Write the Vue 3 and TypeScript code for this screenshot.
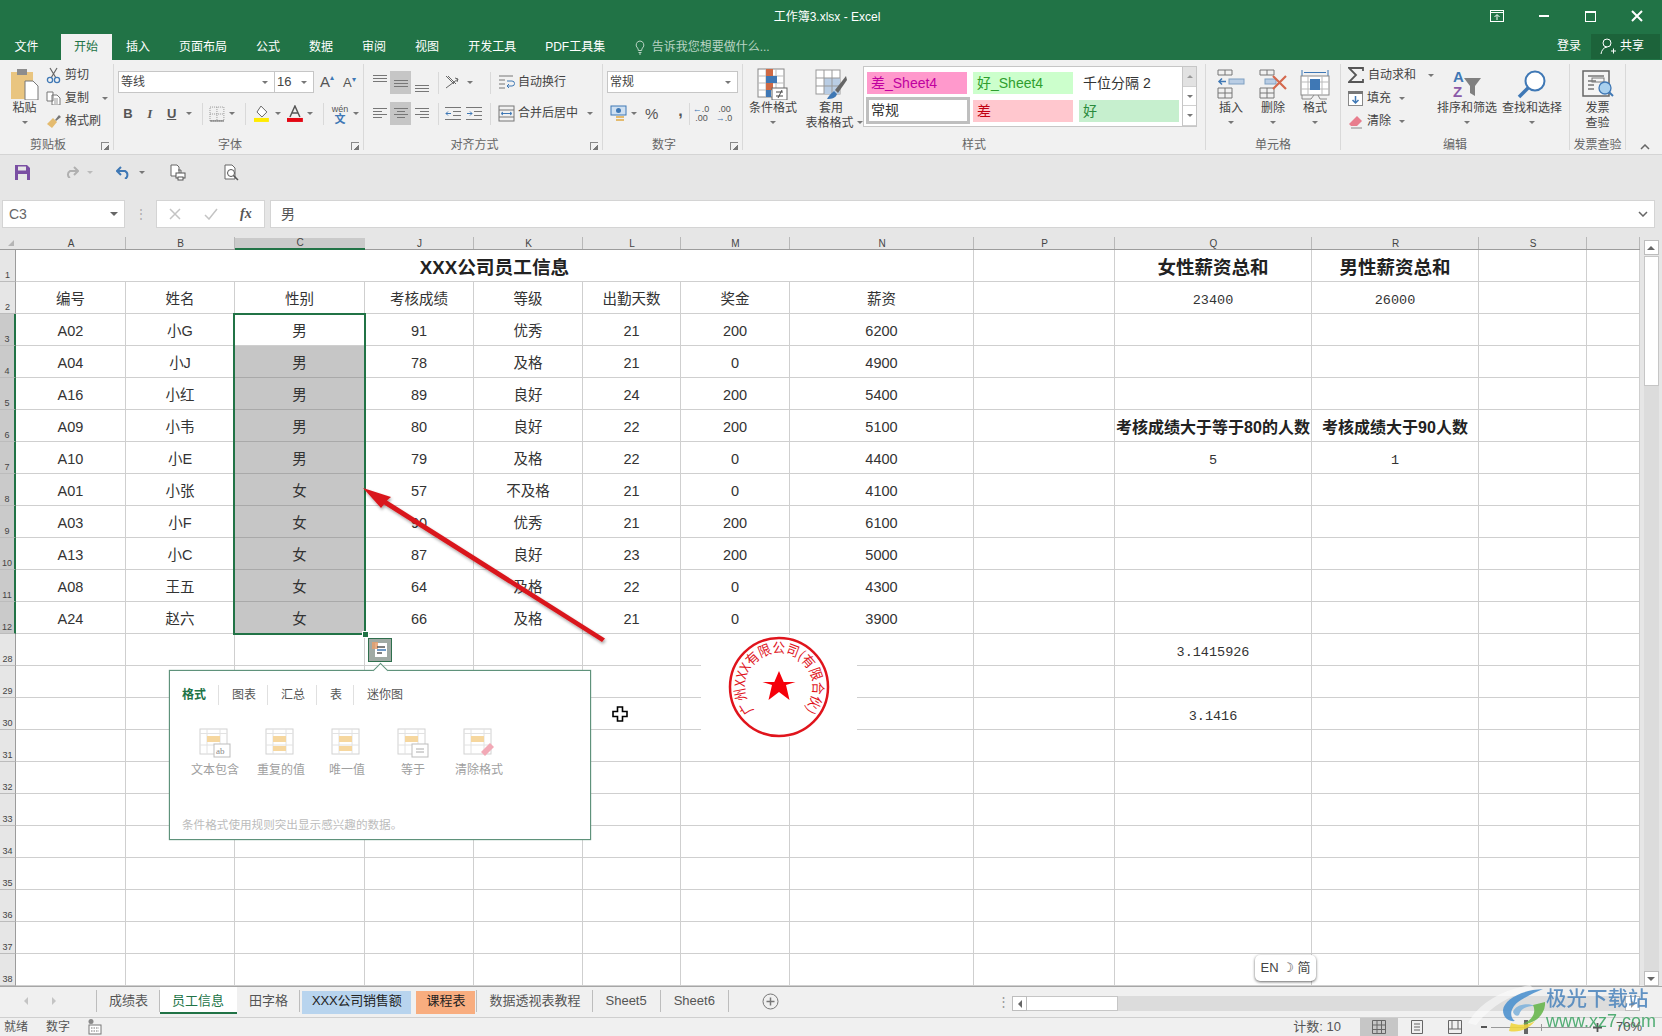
<script setup lang="ts">
const topTabs = ['插入', '页面布局', '公式', '数据', '审阅', '视图', '开发工具', 'PDF工具集']

const colHeads = ['A', 'B', 'C', 'J', 'K', 'L', 'M', 'N', 'P', 'Q', 'R', 'S', '']

const staff = [
  ['A02', '小G', '男', '91', '优秀', '21', '200', '6200'],
  ['A04', '小J', '男', '78', '及格', '21', '0', '4900'],
  ['A16', '小红', '男', '89', '良好', '24', '200', '5400'],
  ['A09', '小韦', '男', '80', '良好', '22', '200', '5100'],
  ['A10', '小E', '男', '79', '及格', '22', '0', '4400'],
  ['A01', '小张', '女', '57', '不及格', '21', '0', '4100'],
  ['A03', '小F', '女', '90', '优秀', '21', '200', '6100'],
  ['A13', '小C', '女', '87', '良好', '23', '200', '5000'],
  ['A08', '王五', '女', '64', '及格', '22', '0', '4300'],
  ['A24', '赵六', '女', '66', '及格', '21', '0', '3900'],
]

// right-hand block, keyed by row number: [Q, R, class]
const side: Record<string, [string, string, string]> = {
  '2': ['23400', '26000', 'mono'],
  '6': ['考核成绩大于等于80的人数', '考核成绩大于90人数', 'side-head'],
  '7': ['5', '1', 'mono'],
  '28': ['3.1415926', '', 'mono'],
  '30': ['3.1416', '', 'mono'],
}

const rowNums = ['3', '4', '5', '6', '7', '8', '9', '10', '11', '12']
const lowerRows = ['28', '29', '30', '31', '32', '33', '34', '35', '36', '37', '38']

const analysisTabs = ['格式', '图表', '汇总', '表', '迷你图']
const analysisItems = [
  { label: '文本包含', kind: 'text' },
  { label: '重复的值', kind: 'dup' },
  { label: '唯一值', kind: 'uniq' },
  { label: '等于', kind: 'eq' },
  { label: '清除格式', kind: 'clear' },
]

const sheets = [
  { name: '成绩表', cls: '' },
  { name: '员工信息', cls: 'active' },
  { name: '田字格', cls: '' },
  { name: 'XXX公司销售额', cls: 'blue' },
  { name: '课程表', cls: 'orange' },
  { name: '数据透视表教程', cls: '' },
  { name: 'Sheet5', cls: 'latin' },
  { name: 'Sheet6', cls: 'latin' },
]
</script>

<template>
  <div class="app">
    <header class="title-bar">
      <div class="title">工作簿3.xlsx - Excel</div>
      <div class="win">
        <span class="win-btn"><svg width="14" height="12" viewBox="0 0 14 12"><rect x="0.5" y="0.5" width="13" height="11" fill="none" stroke="#fff" /><path d="M0 2.5h14M7 10V5M4.5 7 7 4.5 9.5 7" fill="none" stroke="#fff" /></svg></span>
        <span class="win-btn"><svg width="10" height="3" viewBox="0 0 10 3"><rect width="10" height="2" fill="#fff" /></svg></span>
        <span class="win-btn"><svg width="11" height="11" viewBox="0 0 11 11"><rect x="0.5" y="0.5" width="10" height="10" fill="none" stroke="#fff" /><rect width="11" height="2" fill="#fff" /></svg></span>
        <span class="win-btn"><svg width="12" height="12" viewBox="0 0 12 12"><path d="M1 1l10 10M11 1 1 11" stroke="#fff" stroke-width="2" /></svg></span>
      </div>
    </header>

    <nav class="tab-row">
      <span class="tab first">文件</span>
      <span class="tab current">开始</span>
      <span v-for="t in topTabs" :key="t" class="tab">{{ t }}</span>
      <span class="hint">
        <svg width="10" height="15" viewBox="0 0 10 15"><path d="M5 1a4 4 0 0 0-2.500 7c.6.6.8 1.200.8 2.500h3.400c0-1.300.2-1.900.8-2.500A4 4 0 0 0 5 1zM3.500 12.500h3M4 14h2" fill="none" stroke="#b9d3c4" /></svg>
        告诉我您想要做什么...
      </span>
      <span class="login">登录</span>
      <span class="share">
        <svg width="17" height="17" viewBox="0 0 17 17"><circle cx="7" cy="5" r="4" fill="none" stroke="#fff" /><path d="M1 16c.4-3.500 2.500-6.500 6-7M11 13h5M13.500 10.500v5" fill="none" stroke="#fff" /></svg>
        共享
      </span>
    </nav>

    <section class="ribbon">
      <div class="group g-clip launch">
        <div class="body">
          <div class="big paste">
            <div class="big-ic">
              <svg width="30" height="32" viewBox="0 0 30 32"><rect x="1" y="4" width="22" height="27" fill="#e9c580" /><rect x="7" y="1" width="10" height="6" fill="#8d8d8d" /><path d="M15 13h8l5 5v14H15z" fill="#fff" stroke="#777" /></svg>
            </div>
            <span>粘贴</span>
            <i class="caret" />
          </div>
          <div class="small-col">
            <div class="small">
              <svg width="15" height="17" viewBox="0 0 15 17"><path d="M4 1l6 10M11 1 5 11" stroke="#666" stroke-width="1.200" /><circle cx="4" cy="13" r="2.600" fill="none" stroke="#3f78b5" stroke-width="1.300" /><circle cx="11" cy="13" r="2.600" fill="none" stroke="#3f78b5" stroke-width="1.300" /></svg>
              <span>剪切</span>
            </div>
            <div class="small">
              <svg width="15" height="14" viewBox="0 0 15 14"><path d="M1 1h6v9H1zM6 4h5l3 3v7H6z" fill="#fff" stroke="#777" /><path d="M8 8h4M8 10h4M8 12h4" stroke="#999" /></svg>
              <span>复制</span>
              <i class="caret copy-caret" />
            </div>
            <div class="small">
              <svg width="15" height="15" viewBox="0 0 15 15"><path d="M9 6 13 1l2 2-5 4z" fill="#777" /><path d="M1 10 7 4l4 4-5 6z" fill="#e4bb6f" /></svg>
              <span>格式刷</span>
            </div>
          </div>
        </div>
        <div class="label">剪贴板</div>
        <i class="launcher" />
      </div>

      <div class="group g-font launch">
        <div class="body rows">
          <div class="row">
            <div class="select font-name"><span>等线</span><i class="caret" /></div>
            <div class="select font-size"><span>16</span><i class="caret" /></div>
            <span class="grow-a">A<small>▴</small></span>
            <span class="shrink-a">A<small>▾</small></span>
          </div>
          <div class="row font-tools">
            <b class="cell">B</b>
            <i class="cell serif-i">I</i>
            <u class="cell u-btn">U</u>
            <i class="caret tight" />
            <i class="sep" />
            <svg width="16" height="16" viewBox="0 0 16 16"><rect x="1" y="1" width="14" height="14" fill="none" stroke="#999" stroke-dasharray="1 1" /><path d="M8 1v14M1 8h14" stroke="#999" stroke-dasharray="1 1" /><path d="M1 15h14" stroke="#666" /></svg>
            <i class="caret tight" />
            <i class="sep" />
            <svg class="fill-ic" width="18" height="18" viewBox="0 0 18 18"><path d="M8 1l6 6-5 5-5-5z" fill="#fff" stroke="#666" /><rect x="1" y="13" width="15" height="4" fill="#ffeb00" /></svg>
            <i class="caret tight" />
            <svg class="color-ic" width="16" height="18" viewBox="0 0 16 18"><path d="M3 12 8 1l5 11M5 8h6" fill="none" stroke="#555" stroke-width="1.500" /><rect y="13" width="16" height="4" fill="#e30613" /></svg>
            <i class="caret tight" />
            <i class="sep" />
            <span class="wen"><small>wén</small><em>文</em></span>
            <i class="caret tight" />
          </div>
        </div>
        <div class="label">字体</div>
        <i class="launcher" />
      </div>

      <div class="group g-align launch">
        <div class="body rows">
          <div class="row">
            <span class="al"><svg width="14" height="22" viewBox="0 0 14 22"><path d="M0 3.500h14M0 6.500h14M0 9.500h14" stroke="#777" /></svg></span>
            <span class="al on"><svg width="14" height="22" viewBox="0 0 14 22"><path d="M0 8.500h14M0 11.500h14M0 14.500h14" stroke="#777" /></svg></span>
            <span class="al"><svg width="14" height="22" viewBox="0 0 14 22"><path d="M0 13.500h14M0 16.500h14M0 19.500h14" stroke="#777" /></svg></span>
            <i class="sep s-a" />
            <span class="al">
              <svg width="15" height="16" viewBox="0 0 15 16"><path d="M1 1l8 8M3 1l8 8M1 13 13 4M10 3l3 1-1 3" fill="none" stroke="#666" /></svg>
            </span>
            <i class="caret tight" />
            <i class="sep s-b" />
            <svg width="17" height="17" viewBox="0 0 17 17"><path d="M1 2h14M1 6h6M1 10h6M1 14h6" stroke="#777" /><path d="M9 7h5a2 2 0 0 1 0 5h-4M11 10l-2 2 2 2" fill="none" stroke="#3f78b5" /></svg>
            <span class="tool-text">自动换行</span>
          </div>
          <div class="row">
            <span class="al"><svg width="14" height="13" viewBox="0 0 14 13"><path d="M0 1.500h14M0 4.500h9M0 7.500h14M0 10.500h9" stroke="#777" /></svg></span>
            <span class="al on"><svg width="14" height="13" viewBox="0 0 14 13"><path d="M0 1.500h14M3 4.500h8M0 7.500h14M3 10.500h8" stroke="#777" /></svg></span>
            <span class="al"><svg width="14" height="13" viewBox="0 0 14 13"><path d="M0 1.500h14M5 4.500h9M0 7.500h14M5 10.500h9" stroke="#777" /></svg></span>
            <i class="sep s-a" />
            <span class="al"><svg width="16" height="13" viewBox="0 0 16 13"><path d="M0 .5h16M8 4.500h8M8 8.500h8M0 12.500h16" stroke="#777" /><path d="M6 6.500H1M3 4.500l-2 2 2 2" fill="none" stroke="#3f78b5" /></svg></span>
            <span class="al"><svg width="16" height="13" viewBox="0 0 16 13"><path d="M0 .5h16M8 4.500h8M8 8.500h8M0 12.500h16" stroke="#777" /><path d="M1 6.500h5M4 4.500l2 2-2 2" fill="none" stroke="#3f78b5" /></svg></span>
            <i class="sep s-c" />
            <svg width="17" height="17" viewBox="0 0 17 17"><rect x="1" y="1" width="15" height="15" fill="none" stroke="#777" /><path d="M1 5h15M1 12h15" stroke="#777" /><path d="M4 8.500h9M5 7l-2 1.500L5 10M12 7l2 1.500L12 10" fill="none" stroke="#3f78b5" /></svg>
            <span class="tool-text">合并后居中</span>
            <i class="caret merge-caret" />
          </div>
        </div>
        <div class="label">对齐方式</div>
        <i class="launcher" />
      </div>

      <div class="group g-num launch">
        <div class="body rows">
          <div class="row">
            <div class="select num-format"><span>常规</span><i class="caret" /></div>
          </div>
          <div class="row num-tools">
            <svg width="17" height="17" viewBox="0 0 17 17"><rect x="1" y="1" width="15" height="9" fill="#cfe0f1" stroke="#3f78b5" /><circle cx="8.500" cy="5.500" r="2.500" fill="#3f78b5" /><rect x="6" y="11" width="8" height="2" fill="#e4bb6f" /><rect x="6" y="14" width="8" height="2" fill="#e4bb6f" /></svg>
            <i class="caret tight" />
            <span class="pct">%</span>
            <span class="comma">,</span>
            <i class="sep s-d" />
            <span class="dec"><em>←</em>.0<br />.00</span>
            <span class="dec d2">.00<br /><em>→</em>.0</span>
          </div>
        </div>
        <div class="label">数字</div>
        <i class="launcher" />
      </div>

      <div class="group g-style">
        <div class="body">
          <div class="big cond">
            <div class="big-ic">
              <svg width="32" height="32" viewBox="0 0 32 32"><rect x="1" y="1" width="26" height="28" fill="#fff" stroke="#888" /><path d="M9 1v28M19 1v28M1 8h26M1 15h26M1 22h26" stroke="#bbb" /><rect x="9" y="1" width="7" height="7" fill="#cf6a45" /><rect x="9" y="8" width="11" height="7" fill="#3f78b5" /><rect x="9" y="15" width="7" height="7" fill="#cf6a45" /><rect x="9" y="22" width="5" height="7" fill="#3f78b5" /><rect x="15" y="20" width="15" height="12" fill="#fff" stroke="#666" /><path d="M19 24h7M19 28h7M25 22l-4 8" stroke="#444" fill="none" /></svg>
            </div>
            <span>条件格式</span>
            <i class="caret" />
          </div>
          <div class="big tbl">
            <div class="big-ic">
              <svg width="32" height="32" viewBox="0 0 32 32"><rect x="1" y="2" width="24" height="24" fill="#fff" stroke="#999" /><rect x="9" y="10" width="16" height="16" fill="#b9cde4" /><path d="M9 2v24M17 2v24M1 10h24M1 18h24" stroke="#999" /><path d="M31 8 20 22l3 3L32 12z" fill="#666" /><path d="M19 23c-2 2-4 3-7 8 5 0 9-1 10-5z" fill="#3f78b5" /></svg>
            </div>
            <span>套用</span>
            <span class="with-caret">表格格式<i class="caret" /></span>
          </div>
          <div class="gallery">
            <div class="style-grid">
              <span class="st bad4">差_Sheet4</span>
              <span class="st good4">好_Sheet4</span>
              <span class="st comma2">千位分隔 2</span>
              <span class="st normal">常规</span>
              <span class="st bad">差</span>
              <span class="st good">好</span>
            </div>
            <div class="gal-scroll">
              <span class="off"><i class="caret up" /></span>
              <span><i class="caret" /></span>
              <span class="more"><i class="caret" /></span>
            </div>
          </div>
        </div>
        <div class="label">样式</div>
      </div>

      <div class="group g-cells">
        <div class="body">
          <div class="big cell-btn">
            <div class="big-ic">
              <svg width="28" height="30" viewBox="0 0 28 30"><path d="M1 1h14v5H1zM8 1v5M1 19h14v10H1zM8 19v10M1 24h14" fill="none" stroke="#777" /><rect x="12" y="10" width="15" height="5" fill="#b9cde4" stroke="#7f9fc2" /><path d="M9 12.500H2M5 9.500l-3 3 3 3" fill="none" stroke="#3f78b5" stroke-width="1.500" /></svg>
            </div>
            <span>插入</span>
            <i class="caret" />
          </div>
          <div class="big cell-btn">
            <div class="big-ic">
              <svg width="30" height="30" viewBox="0 0 30 30"><path d="M2 1h14v5H2zM9 1v5M2 19h14v10H2zM9 19v10M2 24h14" fill="none" stroke="#777" /><rect x="7" y="10" width="11" height="5" fill="#b9cde4" stroke="#7f9fc2" /><path d="M15 7l13 13M28 7 15 20" stroke="#d4694e" stroke-width="2.200" /></svg>
            </div>
            <span>删除</span>
            <i class="caret" />
          </div>
          <div class="big cell-btn">
            <div class="big-ic">
              <svg width="30" height="32" viewBox="0 0 30 32"><path d="M2 2v6M28 2v6M4 4.500h22" fill="none" stroke="#3f78b5" /><rect x="1" y="8" width="28" height="19" fill="#fff" stroke="#888" /><path d="M8 8v19M22 8v19M1 14h28M1 21h28" stroke="#bbb" /><rect x="10" y="11" width="10" height="11" fill="#3f78b5" /><path d="M2 27v4h9l3-4M18 27l2 4h7" fill="none" stroke="#888" /></svg>
            </div>
            <span>格式</span>
            <i class="caret" />
          </div>
        </div>
        <div class="label">单元格</div>
      </div>

      <div class="group g-edit">
        <div class="body">
          <div class="small-col edit-col">
            <div class="small">
              <svg width="16" height="16" viewBox="0 0 16 16"><path d="M15 4V1H1l7 7-7 7h14v-3" fill="none" stroke="#555" stroke-width="1.800" /></svg>
              <span>自动求和</span>
              <i class="caret sum-caret" />
            </div>
            <div class="small">
              <svg width="15" height="15" viewBox="0 0 15 15"><rect x="0.5" y="0.5" width="14" height="14" fill="#fff" stroke="#888" /><rect width="15" height="3" fill="#777" /><path d="M7.500 5v7M4.500 9l3 3 3-3" fill="none" stroke="#3f78b5" stroke-width="1.500" /></svg>
              <span>填充</span>
              <i class="caret tight" />
            </div>
            <div class="small">
              <svg width="15" height="15" viewBox="0 0 15 15"><path d="M1 10 9 2l5 5-5 5H3z" fill="#e87d8d" /><path d="M3 14h11" stroke="#888" /></svg>
              <span>清除</span>
              <i class="caret tight" />
            </div>
          </div>
          <div class="big wide">
            <div class="big-ic">
              <svg width="30" height="30" viewBox="0 0 30 30"><text x="1" y="13" class="az a">A</text><text x="1" y="28" class="az z">Z</text><path d="M12 9h17l-6 8v10l-5-3v-7z" fill="#808080" /></svg>
            </div>
            <span>排序和筛选</span>
            <i class="caret" />
          </div>
          <div class="big wide find">
            <div class="big-ic">
              <svg width="30" height="30" viewBox="0 0 30 30"><circle cx="18" cy="12" r="9.500" fill="#fff" stroke="#3f78b5" stroke-width="2" /><path d="M11 19 2 28" stroke="#3f78b5" stroke-width="3.500" /></svg>
            </div>
            <span>查找和选择</span>
            <i class="caret" />
          </div>
        </div>
        <div class="label">编辑</div>
      </div>

      <div class="group g-inv">
        <div class="body">
          <div class="big inv">
            <div class="big-ic">
              <svg width="32" height="28" viewBox="0 0 32 28"><rect x="1" y="1" width="26" height="25" fill="#f4f4f4" stroke="#666" stroke-width="1.500" /><path d="M6 6h16M6 11h8M6 15h6M6 19h6" stroke="#777" stroke-width="1.500" /><rect x="10" y="8" width="12" height="4" fill="none" stroke="#777" /><circle cx="23" cy="18" r="6" fill="#a9d0ee" stroke="#3f78b5" stroke-width="1.300" /><path d="M27 22l4 4" stroke="#3f78b5" stroke-width="2" /></svg>
            </div>
            <span>发票</span>
            <span>查验</span>
          </div>
        </div>
        <div class="label">发票查验</div>
      </div>
      <svg class="collapse" width="10" height="6" viewBox="0 0 10 6"><path d="M1 5l4-4 4 4" fill="none" stroke="#666" stroke-width="1.500" /></svg>
    </section>

    <section class="qat">
      <svg class="q-save" width="15" height="15" viewBox="0 0 15 15"><path d="M0 0h12l3 3v12H0z" fill="#7a4fa3" /><rect x="3" y="1.500" width="8" height="4" fill="#e6e6e6" /><rect x="3" y="9" width="9" height="6" fill="#e6e6e6" /></svg>
      <svg class="q-redo" width="14" height="12" viewBox="0 0 14 12"><path d="M13 5H5a4 4 0 0 0 0 7M9 1l4 4-4 4" fill="none" stroke="#b0b0b0" stroke-width="2" /></svg>
      <i class="caret q-caret muted" />
      <svg class="q-undo" width="15" height="13" viewBox="0 0 15 13"><path d="M1 5h8a4.500 4.500 0 0 1 0 8M5 1 1 5l4 4" fill="none" stroke="#3f78b5" stroke-width="2" /></svg>
      <i class="caret q-caret" />
      <svg class="q-print" width="16" height="17" viewBox="0 0 16 17"><path d="M1 1h6l2 2v9H1z" fill="#fff" stroke="#666" /><rect x="6" y="9" width="9" height="5" fill="#fff" stroke="#555" /><rect x="8" y="13" width="5" height="3" fill="#fff" stroke="#555" /><path d="M8 6h3v3" fill="none" stroke="#666" /></svg>
      <svg class="q-prev" width="15" height="17" viewBox="0 0 15 17"><path d="M1 1h7l3 3v11H1z" fill="#fff" stroke="#666" /><circle cx="7" cy="9" r="3.500" fill="#fff" stroke="#555" /><path d="M9.500 11.500 14 16" stroke="#555" stroke-width="1.500" /></svg>
    </section>

    <section class="formula">
      <div class="name-box"><span>C3</span><i class="caret" /></div>
      <span class="f-dots">⋮</span>
      <div class="fx-box">
        <svg width="12" height="12" viewBox="0 0 12 12"><path d="M1 1l10 10M11 1 1 11" stroke="#c4c4c4" stroke-width="1.500" /></svg>
        <svg width="14" height="12" viewBox="0 0 14 12"><path d="M1 7l4 4 8-10" fill="none" stroke="#c4c4c4" stroke-width="1.500" /></svg>
        <em>fx</em>
      </div>
      <div class="f-input">
        <span>男</span>
        <svg width="10" height="6" viewBox="0 0 10 6"><path d="M1 1l4 4 4-4" fill="none" stroke="#666" stroke-width="1.500" /></svg>
      </div>
    </section>

    <main class="sheet">
      <div class="grid-area">
        <div class="grid">
          <div class="corner"><i /></div>
          <div v-for="c in colHeads" :key="c" class="col-head" :class="{ hot: c === 'C' }">{{ c }}</div>

          <div class="row-head">1</div>
          <div class="cell-box merged">XXX公司员工信息</div>
          <div class="cell-box" />
          <div class="cell-box big-head">女性薪资总和</div>
          <div class="cell-box big-head">男性薪资总和</div>
          <div class="cell-box" />
          <div class="cell-box" />

          <div class="row-head">2</div>
          <div v-for="h in ['编号', '姓名', '性别', '考核成绩', '等级', '出勤天数', '奖金', '薪资']" :key="h" class="cell-box">{{ h }}</div>
          <div class="cell-box" />
          <div class="cell-box mono">23400</div>
          <div class="cell-box mono">26000</div>
          <div class="cell-box" />
          <div class="cell-box" />

          <template v-for="(r, i) in staff" :key="rowNums[i]">
            <div class="row-head hot">{{ rowNums[i] }}</div>
            <div v-for="(v, j) in r" :key="j" class="cell-box" :class="{ picked: j === 2 && i > 0 }">{{ v }}</div>
            <div class="cell-box" />
            <div class="cell-box" :class="side[rowNums[i]]?.[2]">{{ side[rowNums[i]]?.[0] }}</div>
            <div class="cell-box" :class="side[rowNums[i]]?.[2]">{{ side[rowNums[i]]?.[1] }}</div>
            <div class="cell-box" />
            <div class="cell-box" />
          </template>

          <template v-for="n in lowerRows" :key="n">
            <div class="row-head">{{ n }}</div>
            <div v-for="k in 8" :key="k" class="cell-box" />
            <div class="cell-box" />
            <div class="cell-box" :class="side[n]?.[2]">{{ side[n]?.[0] }}</div>
            <div class="cell-box" />
            <div class="cell-box" />
            <div class="cell-box" />
          </template>
        </div>

        <!-- things lying over the grid -->
        <div class="selection"><i /></div>

        <div class="seal">
          <svg width="110" height="110" viewBox="-55 -55 110 110">
            <circle r="49" fill="#fff" stroke="#e0141c" stroke-width="2.500" />
            <path id="seal-arc" d="M-24.900 23.200A34 34 0 1 1 24.900 23.200" fill="none" />
            <text class="seal-text" fill="#e0141c">
              <textPath href="#seal-arc" textLength="156" lengthAdjust="spacingAndGlyphs">广州XXX有限公司(有限合伙)</textPath>
            </text>
            <path d="M0-16 4.700-5 16.500-5 7-2 10.500 13 0 5-10.500 13-7-2-16.500-5-4.700-5z" fill="#f5000a" />
          </svg>
        </div>

        <svg class="arrow" width="300" height="200" viewBox="0 0 300 200">
          <defs>
            <filter id="arrow-shadow" x="-10%" y="-10%" width="120%" height="130%"><feDropShadow dx="1" dy="2" stdDeviation="1.500" flood-color="#000" flood-opacity=".35" /></filter>
          </defs>
          <path d="M6 4 34 13 30 16.500 248 154.500 245 158 27 20.500 24 24z" fill="#d9191f" filter="url(#arrow-shadow)" />
        </svg>

        <button class="qa-btn">
          <svg width="16" height="16" viewBox="0 0 16 16"><rect x="3" y="1" width="12" height="14" fill="#fff" /><rect x="0" y="0" width="6" height="7" fill="#e6a06e" opacity=".85" /><path d="M5 5h8" stroke="#555" stroke-width="1.500" /><path d="M5 8h9" stroke="#3f78b5" stroke-width="1.500" /><path d="M5 11h5" stroke="#555" stroke-width="1.500" /></svg>
        </button>

        <div class="analysis">
          <i class="notch" />
          <div class="qa-tabs">
            <span v-for="(t, i) in analysisTabs" :key="t" :class="{ on: i === 0 }">{{ t }}</span>
          </div>
          <div class="qa-items">
            <div v-for="it in analysisItems" :key="it.kind" class="qa-item">
              <svg width="32" height="30" viewBox="0 0 32 30">
                <rect x="1" y="1" width="27" height="25" fill="#fff" stroke="#d2d2d2" />
                <path d="M8 1v25M21 1v25M1 5.500h27M1 17h27" stroke="#e2e2e2" />
                <rect x="8" y="8" width="13" height="6" fill="#f6d79f" />
                <rect v-if="it.kind === 'dup' || it.kind === 'uniq'" x="8" y="18" width="13" height="5" fill="#f6d79f" />
                <template v-if="it.kind === 'text'"><rect x="15" y="16" width="16" height="13" fill="#fff" stroke="#bdbdbd" /><text x="17" y="26" class="ab">ab</text></template>
                <template v-if="it.kind === 'eq'"><rect x="15" y="16" width="16" height="13" fill="#fff" stroke="#bdbdbd" /><path d="M19 21h8M19 24h8" stroke="#aaa" /></template>
                <path v-if="it.kind === 'clear'" d="M18 24 27 15l4 4-9 9z" fill="#f2a9b6" />
              </svg>
              <span>{{ it.label }}</span>
            </div>
          </div>
          <p class="qa-foot">条件格式使用规则突出显示感兴趣的数据。</p>
        </div>

        <svg class="pointer" width="16" height="16" viewBox="0 0 16 16"><path d="M5.500 1h5v4.500H15v5h-4.500V15h-5v-4.500H1v-5h4.500z" fill="#fff" stroke="#000" stroke-width="1.600" /></svg>

        <div class="ime">EN <span class="moon">☽</span> 简</div>
      </div>

      <aside class="v-scroll">
        <span class="v-btn"><i class="caret up" /></span>
        <span class="v-thumb" />
        <span class="v-fill" />
        <span class="v-btn"><i class="caret" /></span>
      </aside>
    </main>

    <section class="sheet-tabs">
      <div class="nav">
        <i class="nav-l" />
        <i class="nav-r" />
      </div>
      <span v-for="s in sheets" :key="s.name" class="sheet-tab" :class="s.cls">{{ s.name }}</span>
      <svg class="plus" width="17" height="17" viewBox="0 0 17 17"><circle cx="8.500" cy="8.500" r="7.500" fill="none" stroke="#777" /><path d="M8.500 4.500v8M4.500 8.500h8" stroke="#777" stroke-width="1.500" /></svg>
      <span class="h-dots">⋮</span>
      <div class="h-scroll">
        <span class="h-btn"><i class="nav-l dark" /></span>
        <span class="h-thumb" />
        <span class="h-end"><i class="nav-r dark" /></span>
      </div>
    </section>

    <footer class="status">
      <span>就绪</span>
      <span class="st-num">数字</span>
      <svg class="st-macro" width="14" height="16" viewBox="0 0 14 16"><circle cx="3" cy="2.500" r="2.500" fill="#888" /><rect x="1" y="6" width="12" height="9" fill="#fff" stroke="#777" /><path d="M3 9h8M3 12h8" stroke="#777" stroke-dasharray="1.500 1" /></svg>
      <span class="st-count">计数: 10</span>
      <span class="view on"><svg width="14" height="14" viewBox="0 0 14 14"><path d="M.5.5h13v13H.5zM5 .5v13M9.500.5v13M.5 5h13M.5 9.500h13" fill="none" stroke="#666" /></svg></span>
      <span class="view"><svg width="12" height="14" viewBox="0 0 12 14"><path d="M.5.5h11v13H.5zM3 4h6M3 7h6M3 10h6" fill="none" stroke="#666" /></svg></span>
      <span class="view"><svg width="14" height="14" viewBox="0 0 14 14"><path d="M.5.5h13v13H.5zM.5 9h13M4 .5V9M10 .5V9" fill="none" stroke="#666" /></svg></span>
      <span class="zoom-minus" />
      <span class="slider"><i class="tick" /><i class="thumb" /></span>
      <svg class="zoom-plus" width="9" height="9" viewBox="0 0 9 9"><path d="M0 4.500h9M4.500 0v9" stroke="#555" stroke-width="1.800" /></svg>
      <span class="zoom-val">70%</span>
    </footer>

    <div class="watermark">
      <svg class="wm-fan" width="90" height="50" viewBox="0 0 90 50"><path d="M0 40C10 22 30 8 62 2L66 6C40 12 20 26 8 42z" fill="#fff" opacity=".6" /></svg>
      <svg class="wm-logo" width="42" height="44" viewBox="0 0 42 44">
        <path d="M40 1C18 2 1 12 0 22c0 8 6 12 12 11C5 28 8 18 18 12 26 7 33 4 40 1z" fill="#4a90cf" />
        <path d="M10 24c2-7 14-10 22-6-8 0-14 2-16 9-2 2-5 0-6-3z" fill="#7fb3dc" />
        <path d="M30 17 42 14C43 26 32 36 20 36c8-4 14-10 10-19z" fill="#66b64b" />
        <path d="M8 35c8 3 18 2 24-2-6 8-16 12-26 10z" fill="#f0d63c" />
      </svg>
      <div class="wm-text">
        <span class="wm-cn">极光下载站</span>
        <span class="wm-url">www.xz7.com</span>
      </div>
    </div>
  </div>
</template>

<style>
html,
body {
  margin: 0;
  overflow: hidden;
}
</style>

<style scoped>
.app {
  position: relative;
  width: 1662px;
  height: 1036px;
  overflow: hidden;
  display: flex;
  flex-direction: column;
  background: #fff;
  font: 12px/1.2 "Liberation Sans", "Noto Sans CJK SC", sans-serif;
  color: #444;
}
i, em { font-style: normal; }

.caret {
  display: inline-block;
  width: 0;
  height: 0;
  border: 3px solid transparent;
  border-top: 3px solid #777;
  border-bottom: 0;
}
.caret.up { border-top: 0; border-bottom: 3px solid #999; }
.caret.tight { margin: 0 4px; }

/* title and tabs */
.title-bar {
  height: 34px;
  flex: none;
  background: #217346;
  display: flex;
  position: relative;
  justify-content: center;
  align-items: center;
  color: #fff;
}
.title { padding: 1px 8px 0 0; font-size: 12px; }
.win { position: absolute; right: 2px; top: 0; height: 32px; display: flex; }
.win-btn { width: 46.5px; display: flex; align-items: center; justify-content: center; }

.tab-row {
  height: 26px;
  flex: none;
  background: #217346;
  display: flex;
  align-items: stretch;
  color: #fff;
}
.tab { padding: 0 14.5px; line-height: 26px; }
.tab.first { margin-right: 7.5px; }
.tab.current { background: #f1f1f1; color: #217346; padding: 0 13.5px; }
.hint { margin-left: 15px; display: flex; align-items: center; gap: 7px; color: #b9d3c4; }
.login { margin-left: auto; line-height: 24px; margin-right: 10px; }
.share {
  width: 69px;
  margin-right: 2px;
  height: 25px;
  background: #1c633a;
  display: flex;
  align-items: center;
  gap: 3px;
  padding-left: 9px;
  box-sizing: border-box;
}

/* ribbon */
.ribbon {
  height: 95px;
  flex: none;
  box-sizing: border-box;
  border-bottom: 1px solid #d4d4d4;
  background: #f1f1f1;
  display: flex;
  position: relative;
}
.group {
  position: relative;
  box-sizing: border-box;
  margin-top: 4px;
  height: 86px;
  border-right: 1px solid #d9d9d9;
  display: flex;
  flex-direction: column;
}
.g-clip { width: 114px; }
.g-font { width: 250px; }
.g-align { width: 239px; }
.g-num { width: 140px; }
.g-style { width: 463px; }
.g-cells { width: 135px; }
.g-edit { width: 229px; }
.g-inv { width: 56px; }
.body { height: 72px; display: flex; }
.label { height: 14px; line-height: 18px; text-align: center; color: #666; }
.launch .label { padding-right: 17px; }
.launcher {
  position: absolute;
  right: 4px;
  bottom: 0;
  width: 7px;
  height: 7px;
  border-left: 1px solid #888;
  border-top: 1px solid #888;
  background: linear-gradient(135deg, transparent 60%, #777 60%);
}

.big { display: flex; flex-direction: column; align-items: center; padding-top: 2px; line-height: 15px; box-sizing: border-box; }
.big-ic { height: 35px; display: flex; align-items: center; justify-content: center; flex: none; }
.big .caret { margin-top: 5px; }
.paste { width: 43px; margin-left: 3px; }
.small-col { display: flex; flex-direction: column; gap: 1px; }
.small { height: 22px; display: flex; align-items: center; gap: 4px; }
.small > svg { flex: none; margin-left: 0; }
.copy-caret { margin-left: 9px; }

.rows { flex-direction: column; padding-top: 7px; gap: 9px; box-sizing: border-box; }
.row { height: 22px; display: flex; align-items: center; flex: none; }
.select {
  box-sizing: border-box;
  height: 22px;
  background: #fff;
  border: 1px solid #c6c6c6;
  display: flex;
  align-items: center;
  justify-content: space-between;
  padding: 0 6px 0 2px;
}
.font-name { width: 157px; margin-left: 4px; }
.font-size { width: 40px; margin-left: -1px; font-size: 13px; }
.grow-a, .shrink-a { color: #555; display: flex; }
.grow-a { margin-left: 6px; font-size: 15px; }
.shrink-a { margin-left: 9px; font-size: 13px; padding-top: 2px; }
.grow-a small, .shrink-a small { font-size: 8px; color: #3f78b5; }
.font-tools { padding-left: 3px; height: 23px; }
.cell { width: 22px; text-align: center; font-size: 13px; color: #555; }
.serif-i { font-family: "Liberation Serif", serif; font-style: italic; font-weight: 700; }
.u-btn { font-weight: 700; }
.sep { width: 1px; height: 22px; background: #d9d9d9; margin: 0 6px; flex: none; }
.fill-ic { margin-left: 1px; }
.color-ic { margin-left: 2px; }
.wen { display: flex; flex-direction: column; align-items: center; width: 18px; line-height: 10px; margin-left: 1px; }
.wen small { font-size: 9px; color: #555; }
.wen em { color: #3f78b5; font-size: 11px; font-weight: 700; }

.al { width: 21px; height: 23px; display: flex; align-items: center; justify-content: center; flex: none; }
.al.on { background: #c6c6c6; }
.g-align .row { padding-left: 5px; height: 23px; }
.g-align .rows { gap: 8px; }
.s-a { margin: 0 3px 0 6px; }
.s-b { margin: 0 7px 0 13px; }
.s-c { margin: 0 7px 0 6px; }
.tool-text { margin-left: 3px; font-size: 12px; }
.merge-caret { margin-left: 9px; }

.num-format { width: 131px; margin-left: 4px; padding-left: 2px; }
.num-tools { padding-left: 7px; height: 23px; }
.pct { font-size: 15px; margin-left: 4px; color: #555; }
.comma { font-size: 16px; font-weight: 700; margin: -6px 0 0 20px; color: #555; }
.s-d { margin: 0 3px 0 6px; }
.dec { font-size: 9px; line-height: 9px; text-align: right; width: 15px; color: #555; }
.dec em { color: #3f78b5; font-weight: 700; }
.d2 { margin-left: 8px; }

.cond { width: 60px; }
.tbl { width: 56px; }
.with-caret { white-space: nowrap; margin-left: 6px; }
.with-caret .caret { margin: 0 0 2px 3px; vertical-align: middle; }
.gallery {
  width: 334px;
  height: 61px;
  box-sizing: border-box;
  margin: 2px 0 0 4px;
  background: #fff;
  border: 1px solid #c6c6c6;
  display: flex;
  padding: 5px 0 0 3px;
  font-size: 14px;
}
.style-grid { display: grid; grid-template-columns: repeat(3, 100px); grid-auto-rows: 22px; gap: 6px; }
.st { padding-left: 4px; line-height: 22px; white-space: nowrap; }
.bad4 { background: #ff99cc; color: #c000a0; }
.good4 { background: #ccffcc; color: #2f9e2f; }
.comma2 { color: #333; }
.normal { margin: -3px -3px -2px -1px; border: 3px solid #bfbfbf; line-height: 21px; padding-left: 2px; color: #333; background: #fff; box-sizing: border-box; }
.bad { background: #ffc7ce; color: #c00010; }
.good { background: #c6efce; color: #2a8a3c; }
.gal-scroll { margin: -5px 0 0 auto; width: 13px; display: flex; flex-direction: column; flex: none; border-left: 1px solid #c6c6c6; box-sizing: content-box; }
.gal-scroll span { flex: 1; display: flex; align-items: center; justify-content: center; background: #fff; border-bottom: 1px solid #d0d0d0; }
.gal-scroll .off { background: #e2e2e2; }

.cell-btn { width: 42px; }
.cell-btn:first-child { margin-left: 4px; }
.edit-col { width: 89px; margin-left: 7px; flex: none; }
.edit-col .small { font-size: 12px; }
.sum-caret { margin-left: 8px; }
.wide { width: 60px; white-space: nowrap; flex: none; }
.find { margin-left: 5px; }
.inv { width: 55px; }
.az { font: 700 15px "Liberation Sans", sans-serif; }
.az.a { fill: #3f78b5; }
.az.z { fill: #8a5aa8; }
.collapse { position: absolute; right: 12px; bottom: 4px; }

/* quick access */
.qat {
  height: 45px;
  flex: none;
  box-sizing: border-box;
  background: #e6e6e6;
  display: flex;
  align-items: center;
  padding-bottom: 11px;
}
.q-save { margin-left: 15px; }
.q-redo { margin-left: 35px; }
.q-undo { margin-left: 23px; }
.q-caret { margin-left: 8px; }
.q-caret.muted { border-top-color: #bbb; }
.q-print { margin-left: 25px; }
.q-prev { margin-left: 38px; }

/* formula bar */
.formula { height: 28px; flex: none; background: #e6e6e6; display: flex; align-items: stretch; }
.name-box, .fx-box, .f-input {
  box-sizing: border-box;
  background: #fff;
  border: 1px solid #d4d4d4;
  display: flex;
  align-items: center;
  font-size: 14px;
}
.name-box { width: 123px; margin-left: 2px; justify-content: space-between; padding: 0 6px; color: #666; }
.name-box .caret { border-width: 4px; border-top-color: #666; }
.f-dots { width: 31px; text-align: center; line-height: 28px; color: #aaa; }
.fx-box { width: 109px; padding-left: 12px; }
.fx-box svg + svg { margin-left: 23px; }
.fx-box em { margin-left: 22px; font: italic 700 14px "Liberation Serif", serif; color: #555; }
.f-input { width: 1385px; margin-left: 5px; padding: 0 6px 0 10px; justify-content: space-between; color: #555; }

/* sheet */
.sheet { height: 759px; flex: none; display: flex; border-bottom: 1px solid #a6a6a6; box-sizing: border-box; }
.grid-area { position: relative; width: 1640px; height: 758px; overflow: hidden; }
.grid {
  display: grid;
  grid-template-columns: 16px 110px 109px 130px 109px 109px 98px 109px 184px 141px 197px 167px 108px 53px;
  grid-template-rows: 22px repeat(23, 32px);
  color: #333;
}
.corner { background: #e6e6e6; border-bottom: 1px solid #9c9c9c; position: relative; box-sizing: border-box; }
.corner i { position: absolute; right: 2px; bottom: 3px; border: 3px solid transparent; border-right-color: #b5b5b5; border-bottom-color: #b5b5b5; }
.col-head {
  background: linear-gradient(#b8b8b8, #b8b8b8) right bottom / 1px 12px no-repeat, #e6e6e6;
  box-sizing: border-box;
  border-bottom: 1px solid #9c9c9c;
  text-align: center;
  font-size: 10px;
  line-height: 12px;
  padding-top: 10px;
  color: #444;
}
.col-head.hot { background: linear-gradient(#e6e6e6 10px, #cacaca 10px); border-bottom: 2px solid #217346; line-height: 10px; }
.row-head {
  background: #e6e6e6;
  box-sizing: border-box;
  border-bottom: 1px solid #bcbcbc;
  border-right: 1px solid #9c9c9c;
  font-size: 9px;
  text-align: center;
  line-height: 10px;
  padding-top: 20px;
  color: #444;
}
.row-head.hot { background: #cacaca; border-right: 2px solid #217346; }
.cell-box {
  box-sizing: border-box;
  border-right: 1px solid #cfcfcf;
  border-bottom: 1px solid #cfcfcf;
  font-size: 14.5px;
  padding-top: 4px;
  display: flex;
  align-items: center;
  justify-content: center;
  white-space: nowrap;
}
.cell-box.picked { background: #c6c6c6; border-bottom-color: #a9a9a9; }
.merged { grid-column: span 8; font-size: 18.7px; font-weight: 700; color: #222; padding-top: 6px; }
.big-head { font-size: 18.5px; font-weight: 700; color: #222; padding-top: 6px; }
.side-head { font-size: 16px; font-weight: 700; color: #222; }
.mono { font-family: "Liberation Mono", monospace; font-size: 13.5px; padding-top: 7px; }

.selection {
  position: absolute;
  left: 233px;
  top: 85px;
  width: 133px;
  height: 322px;
  box-sizing: border-box;
  border: 2px solid #217346;
}
.selection i {
  position: absolute;
  right: -5px;
  bottom: -5px;
  width: 5px;
  height: 5px;
  background: #217346;
  border: 1px solid #fff;
}

.seal {
  position: absolute;
  left: 701px;
  top: 407px;
  width: 156px;
  height: 102px;
  background: #fff;
  display: flex;
  align-items: center;
  justify-content: center;
}
.seal svg { flex: none; margin-top: 2px; }
.seal-text { font: 14px "Noto Sans CJK SC", sans-serif; }

.arrow { position: absolute; left: 357px; top: 256px; pointer-events: none; }

.qa-btn {
  position: absolute;
  left: 368px;
  top: 410px;
  width: 24px;
  height: 24px;
  padding: 0;
  background: #a0aaa4;
  border: 1px solid #2f6f4d;
  display: flex;
  align-items: center;
  justify-content: center;
}
.analysis {
  position: absolute;
  left: 169px;
  top: 442px;
  width: 422px;
  height: 170px;
  box-sizing: border-box;
  background: #fff;
  border: 1px solid #5f927b;
  box-shadow: 0 0 1px #5f927b;
  padding: 14px 12px 0;
}
.notch {
  position: absolute;
  left: 205px;
  top: -6px;
  width: 10px;
  height: 10px;
  background: #fff;
  border-left: 1px solid #5f927b;
  border-top: 1px solid #5f927b;
  transform: rotate(45deg);
}
.qa-tabs { display: flex; height: 20px; align-items: center; color: #555; }
.qa-tabs span { padding: 0 11px 0 13px; border-right: 1px solid #e0e0e0; line-height: 20px; }
.qa-tabs span:first-child { padding-left: 0; padding-right: 12px; }
.qa-tabs span:last-child { border: 0; }
.qa-tabs .on { color: #217346; font-weight: 700; }
.qa-items { display: flex; margin: 23px 0 0 0; }
.qa-item { width: 66px; display: flex; flex-direction: column; align-items: center; gap: 5px; color: #a0a0a0; }
.qa-foot { margin: 41px 0 0; color: #bcbcbc; font-size: 11.6px; white-space: nowrap; }
.ab { font: 9px "Liberation Serif", serif; fill: #888; }

.pointer { position: absolute; left: 612px; top: 478px; }

.ime {
  position: absolute;
  left: 1255px;
  top: 727px;
  width: 61px;
  height: 26px;
  box-sizing: border-box;
  border-radius: 5px;
  background: #fff;
  box-shadow: 0 1px 3px rgba(0, 0, 0, .6);
  font-size: 13px;
  color: #444;
  text-align: center;
  line-height: 25px;
  white-space: nowrap;
}
.moon { font-family: "DejaVu Sans", sans-serif; }

.v-scroll { width: 22px; background: #e6e6e6; display: flex; flex-direction: column; align-items: center; padding-top: 12px; box-sizing: border-box; }
.v-btn { width: 15px; height: 15px; background: #fff; border: 1px solid #bdbdbd; box-sizing: border-box; display: flex; align-items: center; justify-content: center; flex: none; }
.v-btn .caret { border-width: 4px; border-top-color: #666; }
.v-btn .caret.up { border-top-width: 0; border-bottom-color: #666; }
.v-thumb { width: 15px; height: 130px; background: #fff; border: 1px solid #c6c6c6; box-sizing: border-box; margin-top: 1px; flex: none; }
.v-fill { flex: 1; width: 15px; background: #dcdcdc; }

/* sheet tabs */
.sheet-tabs {
  height: 31px;
  flex: none;
  box-sizing: border-box;
  background: #f0f0f0;
  border-bottom: 1px solid #cfcfcf;
  display: flex;
  align-items: stretch;
  font-size: 13px;
  color: #555;
}
.nav { width: 97px; display: flex; align-items: center; padding-left: 24px; gap: 24px; box-sizing: border-box; border-right: 1px solid #bdbdbd; margin: 3px 0 5px; flex: none; }
.nav-l, .nav-r { width: 0; height: 0; border: 4px solid transparent; display: inline-block; }
.nav-l { border-right-color: #c4c4c4; border-left: 0; }
.nav-r { border-left-color: #c4c4c4; border-right: 0; }
.nav-l.dark { border-right-color: #666; }
.nav-r.dark { border-left-color: #999; }
.sheet-tab { padding: 0 11px 0 12px; height: 22px; margin-top: 3px; line-height: 22px; box-sizing: border-box; border-right: 1px solid #bdbdbd; white-space: nowrap; flex: none; }
.sheet-tab.active { background: #fff; color: #217346; border-right: 0; border-bottom: 2px solid #217346; height: 27px; margin-top: 0; line-height: 28px; padding: 0 13px 0 12px; }
.sheet-tab.blue { background: #b8d4ee; color: #222; margin: 4px 3px 0 2px; padding: 0 10px; border: 0; height: 23px; line-height: 20px; letter-spacing: -.2px; }
.sheet-tab.orange { background: #f8ad7f; color: #222; margin: 4px 2px 0 2px; padding: 0 10px; border: 0; height: 23px; line-height: 20px; }
.sheet-tab.orange + .sheet-tab { box-shadow: -1px 0 0 #bdbdbd; }
.sheet-tab.latin { padding: 0 13px; }
.plus { margin: 6px 0 0 33px; flex: none; }
.h-dots { margin-left: auto; width: 17px; line-height: 30px; color: #999; text-align: center; }
.h-scroll { width: 628px; margin: 9px 22px 6px 0; background: #dcdcdc; display: flex; align-items: stretch; position: relative; flex: none; }
.h-btn { width: 15px; background: #fff; border: 1px solid #bdbdbd; box-sizing: border-box; display: flex; align-items: center; justify-content: center; }
.h-thumb { width: 91px; background: #fff; border: 1px solid #c6c6c6; border-left: 0; box-sizing: border-box; }
.h-end { margin-left: auto; width: 15px; background: #fff; border: 1px solid #bdbdbd; box-sizing: border-box; display: flex; align-items: center; justify-content: center; }

/* status */
.status { height: 18px; flex: none; background: #f0f0f0; display: flex; align-items: center; padding-left: 4px; color: #555; font-size: 12px; }
.st-num { margin-left: 18px; }
.st-macro { margin-left: 18px; }
.st-count { margin-left: auto; margin-right: 19px; font-size: 13px; }
.view { width: 38px; height: 18px; display: flex; align-items: center; justify-content: center; flex: none; }
.view.on { background: #c6c6c6; }
.zoom-minus { width: 6px; height: 2px; background: #555; margin-left: 7px; flex: none; }
.slider { position: relative; width: 100px; height: 1px; background: #999; margin-left: 4px; flex: none; }
.tick { position: absolute; left: 50px; top: -3px; width: 1px; height: 7px; background: #999; }
.thumb { position: absolute; left: 33px; top: -7px; width: 4px; height: 14px; background: #666; }
.zoom-plus { margin-left: 2px; flex: none; }
.zoom-val { margin: 0 20px 0 14px; font-size: 13px; position: relative; z-index: 2; }

/* watermark */
.watermark { position: absolute; left: 1460px; top: 985px; width: 202px; height: 51px; pointer-events: none; opacity: .88; }
.wm-fan { position: absolute; left: 8px; top: -2px; }
.wm-logo { position: absolute; left: 43px; top: 3px; }
.wm-text { position: absolute; left: 86px; top: 0; display: flex; flex-direction: column; }
.wm-cn { font: 500 20.5px/24px "Noto Sans CJK SC", sans-serif; color: #4e86bd; white-space: nowrap; }
.wm-url { font: 400 18px/18px "Liberation Sans", sans-serif; color: #3ea565; white-space: nowrap; margin-top: 3px; }
</style>
